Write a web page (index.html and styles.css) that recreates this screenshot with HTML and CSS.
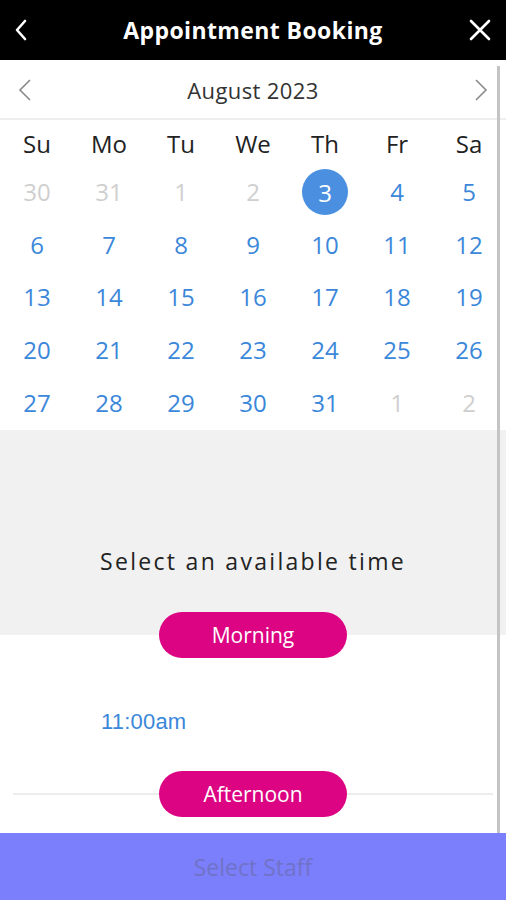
FILE: index.html
```html
<!DOCTYPE html>
<html>
<head>
<meta charset="utf-8">
<link rel="stylesheet" href="styles.css">
</head>
<body>
<div class="app">
  <header class="topbar">
    <svg class="top-icon" width="20" height="24" viewBox="0 0 20 24"><polyline points="13,3 5,12 13,21" fill="none" stroke="#fff" stroke-width="2.6" stroke-linecap="round" stroke-linejoin="round"/></svg>
    <h1 class="title">Appointment Booking</h1>
    <svg class="top-icon" width="24" height="24" viewBox="0 0 24 24"><path d="M3 3 L21 21 M21 3 L3 21" stroke="#fff" stroke-width="2.6" stroke-linecap="round"/></svg>
  </header>
  <main class="content">
    <div class="scrollbar"></div>
    <div class="month-nav">
      <svg width="14" height="24" viewBox="0 0 14 24"><polyline points="12,2 2,12 12,22" fill="none" stroke="#8a8a8a" stroke-width="1.6"/></svg>
      <span class="month">August 2023</span>
      <svg width="14" height="24" viewBox="0 0 14 24"><polyline points="2,2 12,12 2,22" fill="none" stroke="#8a8a8a" stroke-width="1.6"/></svg>
    </div>
    <div class="calendar">
      <div class="wd">Su</div><div class="wd">Mo</div><div class="wd">Tu</div><div class="wd">We</div><div class="wd">Th</div><div class="wd">Fr</div><div class="wd">Sa</div>
      <div class="day off">30</div><div class="day off">31</div><div class="day off">1</div><div class="day off">2</div><div class="day"><span class="sel">3</span></div><div class="day">4</div><div class="day">5</div>
      <div class="day">6</div><div class="day">7</div><div class="day">8</div><div class="day">9</div><div class="day">10</div><div class="day">11</div><div class="day">12</div>
      <div class="day">13</div><div class="day">14</div><div class="day">15</div><div class="day">16</div><div class="day">17</div><div class="day">18</div><div class="day">19</div>
      <div class="day">20</div><div class="day">21</div><div class="day">22</div><div class="day">23</div><div class="day">24</div><div class="day">25</div><div class="day">26</div>
      <div class="day">27</div><div class="day">28</div><div class="day">29</div><div class="day">30</div><div class="day">31</div><div class="day off">1</div><div class="day off">2</div>
    </div>
    <section class="prompt">
      <p class="prompt-text">Select an available time</p>
    </section>
    <div class="period-head first"><span class="pill">Morning</span></div>
    <div class="slots"><span class="slot">11:00am</span></div>
    <div class="period-head lined"><span class="pill">Afternoon</span></div>
    <div class="spacer"></div>
  </main>
  <footer class="footer">Select Staff</footer>
</div>
</body>
</html>
```
FILE: styles.css
```css
* { box-sizing: border-box; }
html, body { margin: 0; padding: 0; }
body { width: 506px; height: 900px; overflow: hidden; background: #fff; font-family: "Open Sans", "Noto Sans", sans-serif; }
.app { display: flex; flex-direction: column; height: 900px; }
.topbar { height: 60px; background: #000; display: flex; align-items: center; justify-content: space-between; padding: 0 14px 0 12px; }
.top-icon { display: block; }
.title { margin: 0; color: #fff; font-family: "Open Sans", sans-serif; font-weight: 700; font-size: 23px; letter-spacing: 0.4px; padding-left: 6px; }
.content { position: relative; flex: 1; display: flex; flex-direction: column; }
.scrollbar { position: absolute; left: 497px; top: 6px; width: 3px; height: 767px; background: #c4c4c4; }
.month-nav { height: 60px; display: flex; align-items: center; justify-content: space-between; padding: 2px 18px 0 18px; border-bottom: 2px solid #eeeeee; }
.month { font-size: 22px; letter-spacing: 0.4px; color: #333; }
.calendar { display: grid; grid-template-columns: repeat(7, 72px); grid-auto-rows: 52.8px; grid-template-rows: 46px; padding-left: 1px; }
.wd { display: flex; align-items: center; justify-content: center; font-size: 24px; color: #222; }
.day { display: flex; align-items: center; justify-content: center; font-size: 24px; color: #3b87d9; padding-bottom: 2px; }
.day.off { color: #cfcfcf; }
.sel { width: 46px; height: 46px; border-radius: 50%; background: #4a8fe0; color: #fff; display: flex; align-items: center; justify-content: center; margin-top: 2px; }
.prompt { height: 182px; background: #f1f1f1; display: flex; align-items: flex-start; justify-content: center; }
.prompt-text { margin: 115px 0 0; font-size: 23px; letter-spacing: 2.3px; color: #222; }
.period-head { height: 46px; display: flex; align-items: center; justify-content: center; }
.period-head.first { background: linear-gradient(#f1f1f1 50%, #fff 50%); }
.period-head.lined { margin: 0 13px; background: linear-gradient(transparent 22px, #ececec 22px, #ececec 24px, transparent 24px); }
.pill { width: 188px; height: 46px; border-radius: 23px; background: #dc0482; color: #fff; font-size: 21px; display: flex; align-items: center; justify-content: center; }
.slots { height: 113px; padding: 51px 0 0 101px; }
.slot { font-family: "Liberation Sans", Arial, sans-serif; font-size: 22px; letter-spacing: 0.2px; color: #3b87d9; }
.spacer { height: 16px; }
.footer { height: 67px; background: #7b7ffb; color: #7072c8; font-size: 23px; display: flex; align-items: center; justify-content: center; }
```
